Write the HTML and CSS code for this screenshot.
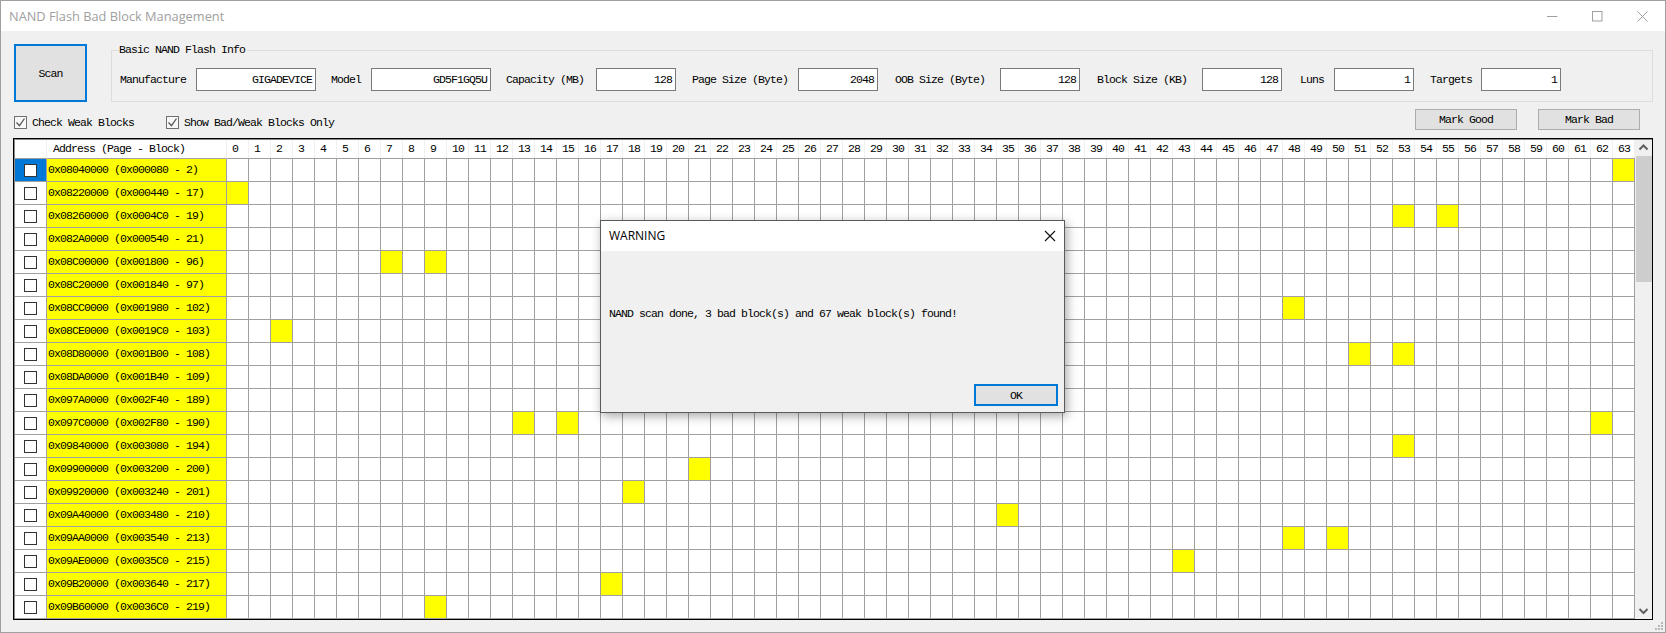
FILE: index.html
```html
<!DOCTYPE html>
<html lang="en">
<head>
<meta charset="utf-8">
<title>NAND Flash Bad Block Management</title>
<link rel="stylesheet" href="styles.css">
</head>
<body>
<div class="window">
  <header class="titlebar">
    <span class="title">NAND Flash Bad Block Management</span>
    <div class="controls">
      <svg width="11" height="11" viewBox="0 0 11 11"><path d="M0 5.5h10.5" stroke="#a0a0a0" fill="none"/></svg>
      <svg width="11" height="11" viewBox="0 0 11 11"><rect x="0.5" y="0.5" width="9.5" height="9.5" stroke="#a0a0a0" fill="none"/></svg>
      <svg width="11" height="11" viewBox="0 0 11 11"><path d="M0.5 0.5l10 10M10.500 0.5l-10 10" stroke="#a0a0a0" fill="none"/></svg>
    </div>
  </header>
  <main class="content">
    <section class="top-row">
      <button class="btn scan">Scan</button>
      <fieldset class="info">
        <legend>Basic NAND Flash Info</legend>
        <div class="info-grid">
          <label>Manufacture</label><span class="value">GIGADEVICE</span>
          <label>Model</label><span class="value">GD5F1GQ5U</span>
          <label>Capacity (MB)</label><span class="value short">128</span>
          <label>Page Size (Byte)</label><span class="value short">2048</span>
          <label>OOB Size (Byte)</label><span class="value short">128</span>
          <label>Block Size (KB)</label><span class="value short">128</span>
          <label>Luns</label><span class="value short">1</span>
          <label>Targets</label><span class="value short">1</span>
        </div>
      </fieldset>
    </section>
    <section class="options">
      <span class="check-label first"><span class="box checked"><svg width="11" height="11" viewBox="0 0 11 11"><path d="M1.500 5.500l3 3.200 5-7.200" stroke="#555" stroke-width="1.3" fill="none"/></svg></span>Check Weak Blocks</span>
      <span class="check-label second"><span class="box checked"><svg width="11" height="11" viewBox="0 0 11 11"><path d="M1.500 5.500l3 3.200 5-7.200" stroke="#555" stroke-width="1.3" fill="none"/></svg></span>Show Bad/Weak Blocks Only</span>
      <button class="btn mark good">Mark Good</button>
      <button class="btn mark">Mark Bad</button>
    </section>
    <section class="table">
      <div class="table-main">
        <div class="row head">
          <div class="chk"></div>
          <div class="addr">Address (Page - Block)</div>
          <div class="cols">
            <span>0</span><span>1</span><span>2</span><span>3</span><span>4</span><span>5</span><span>6</span><span>7</span><span>8</span><span>9</span><span>10</span><span>11</span><span>12</span><span>13</span><span>14</span><span>15</span><span>16</span><span>17</span><span>18</span><span>19</span><span>20</span><span>21</span><span>22</span><span>23</span><span>24</span><span>25</span><span>26</span><span>27</span><span>28</span><span>29</span><span>30</span><span>31</span><span>32</span><span>33</span><span>34</span><span>35</span><span>36</span><span>37</span><span>38</span><span>39</span><span>40</span><span>41</span><span>42</span><span>43</span><span>44</span><span>45</span><span>46</span><span>47</span><span>48</span><span>49</span><span>50</span><span>51</span><span>52</span><span>53</span><span>54</span><span>55</span><span>56</span><span>57</span><span>58</span><span>59</span><span>60</span><span>61</span><span>62</span><span>63</span>
          </div>
        </div>
        <div class="row"><div class="chk selected"><span class="box white"></span></div><div class="addr y">0x08040000 (0x000080 - 2)</div><div class="cells"><i style="grid-column:64"></i></div></div>
        <div class="row"><div class="chk"><span class="box"></span></div><div class="addr y">0x08220000 (0x000440 - 17)</div><div class="cells"><i style="grid-column:1"></i></div></div>
        <div class="row"><div class="chk"><span class="box"></span></div><div class="addr y">0x08260000 (0x0004C0 - 19)</div><div class="cells"><i style="grid-column:54"></i><i style="grid-column:56"></i></div></div>
        <div class="row"><div class="chk"><span class="box"></span></div><div class="addr y">0x082A0000 (0x000540 - 21)</div><div class="cells"></div></div>
        <div class="row"><div class="chk"><span class="box"></span></div><div class="addr y">0x08C00000 (0x001800 - 96)</div><div class="cells"><i style="grid-column:8"></i><i style="grid-column:10"></i></div></div>
        <div class="row"><div class="chk"><span class="box"></span></div><div class="addr y">0x08C20000 (0x001840 - 97)</div><div class="cells"></div></div>
        <div class="row"><div class="chk"><span class="box"></span></div><div class="addr y">0x08CC0000 (0x001980 - 102)</div><div class="cells"><i style="grid-column:49"></i></div></div>
        <div class="row"><div class="chk"><span class="box"></span></div><div class="addr y">0x08CE0000 (0x0019C0 - 103)</div><div class="cells"><i style="grid-column:3"></i></div></div>
        <div class="row"><div class="chk"><span class="box"></span></div><div class="addr y">0x08D80000 (0x001B00 - 108)</div><div class="cells"><i style="grid-column:52"></i><i style="grid-column:54"></i></div></div>
        <div class="row"><div class="chk"><span class="box"></span></div><div class="addr y">0x08DA0000 (0x001B40 - 109)</div><div class="cells"></div></div>
        <div class="row"><div class="chk"><span class="box"></span></div><div class="addr y">0x097A0000 (0x002F40 - 189)</div><div class="cells"></div></div>
        <div class="row"><div class="chk"><span class="box"></span></div><div class="addr y">0x097C0000 (0x002F80 - 190)</div><div class="cells"><i style="grid-column:14"></i><i style="grid-column:16"></i><i style="grid-column:63"></i></div></div>
        <div class="row"><div class="chk"><span class="box"></span></div><div class="addr y">0x09840000 (0x003080 - 194)</div><div class="cells"><i style="grid-column:54"></i></div></div>
        <div class="row"><div class="chk"><span class="box"></span></div><div class="addr y">0x09900000 (0x003200 - 200)</div><div class="cells"><i style="grid-column:22"></i></div></div>
        <div class="row"><div class="chk"><span class="box"></span></div><div class="addr y">0x09920000 (0x003240 - 201)</div><div class="cells"><i style="grid-column:19"></i></div></div>
        <div class="row"><div class="chk"><span class="box"></span></div><div class="addr y">0x09A40000 (0x003480 - 210)</div><div class="cells"><i style="grid-column:36"></i></div></div>
        <div class="row"><div class="chk"><span class="box"></span></div><div class="addr y">0x09AA0000 (0x003540 - 213)</div><div class="cells"><i style="grid-column:49"></i><i style="grid-column:51"></i></div></div>
        <div class="row"><div class="chk"><span class="box"></span></div><div class="addr y">0x09AE0000 (0x0035C0 - 215)</div><div class="cells"><i style="grid-column:44"></i></div></div>
        <div class="row"><div class="chk"><span class="box"></span></div><div class="addr y">0x09B20000 (0x003640 - 217)</div><div class="cells"><i style="grid-column:18"></i></div></div>
        <div class="row"><div class="chk"><span class="box"></span></div><div class="addr y">0x09B60000 (0x0036C0 - 219)</div><div class="cells"><i style="grid-column:10"></i></div></div>
      </div>
      <div class="scrollbar">
        <svg class="arrow" width="15" height="16" viewBox="0 0 15 16"><path d="M3.500 9.500l4-4 4 4" stroke="#606060" stroke-width="2" fill="none"/></svg>
        <div class="track"><div class="thumb"></div></div>
        <svg class="arrow" width="15" height="16" viewBox="0 0 15 16"><path d="M3.500 6l4 4 4-4" stroke="#606060" stroke-width="2" fill="none"/></svg>
      </div>
    </section>
    <svg class="grip" width="10" height="10" viewBox="0 0 10 10"><path d="M7 1h2v2H7zM4 4h2v2H4zM7 4h2v2H7zM1 7h2v2H1zM4 7h2v2H4zM7 7h2v2H7z" fill="#b8b8b8"/></svg>
  </main>
  <div class="dialog">
    <div class="dialog-title">
      <span>WARNING</span>
      <svg width="12" height="12" viewBox="0 0 12 12"><path d="M1 1l10 10M11 1L1 11" stroke="#111" stroke-width="1.1" fill="none"/></svg>
    </div>
    <div class="dialog-body">
      <p>NAND scan done, 3 bad block(s) and 67 weak block(s) found!</p>
      <div class="dialog-actions"><button class="btn ok">OK</button></div>
    </div>
  </div>
</div>
</body>
</html>
```
FILE: styles.css
```css
* { box-sizing: border-box; }
html, body { margin: 0; height: 100%; overflow: hidden; background: #f0f0f0; }
body, button {
  font-family: "Liberation Mono", monospace;
  font-size: 11.5px;
  letter-spacing: -0.9px;
  color: #000;
}
.window {
  position: relative;
  width: 1666px;
  height: 633px;
  border: 1px solid #a0a0a0;
  display: flex;
  flex-direction: column;
  background: #f0f0f0;
}
.titlebar {
  height: 30px;
  background: #fff;
  display: flex;
  align-items: center;
  justify-content: space-between;
  padding-left: 8px;
}
.title {
  font-family: "Open Sans", sans-serif;
  font-size: 12.800px;
  letter-spacing: 0;
  color: #a0a0a0;
}
.controls { display: flex; gap: 34px; padding-right: 17px; }
.content { position: relative; flex: 1; padding: 13px 12px 0 13px; }
.btn {
  display: block;
  background: #e1e1e1;
  border: 1px solid #adadad;
  padding: 0;
}
.top-row { display: flex; align-items: flex-start; }
.scan { width: 73px; height: 58px; border: 2px solid #0078d7; flex: none; }
.info {
  flex: 1;
  margin: 0 0 0 24px;
  padding: 12px 0 0 8px;
  height: 58px;
  border: 1px solid #dcdcdc;
  min-width: 0;
}
.info legend { padding: 0 2px 0 0; margin-left: -1px; line-height: 12px; }
.info-grid {
  display: grid;
  grid-template-columns: 76px 135px 40px 135px 90px 96px 106px 97px 105px 97px 105px 98px 34px 96px 51px 80px;
  align-items: center;
}
.value {
  display: block;
  width: 120px;
  height: 23px;
  line-height: 21px;
  background: #fff;
  border: 1px solid #7a7a7a;
  text-align: right;
  padding-right: 3px;
}
.value.short { width: 80px; }
.options {
  display: flex;
  align-items: center;
  height: 21px;
  margin-top: 7px;
}
.check-label { display: flex; align-items: center; gap: 5px; height: 21px; margin-top: 6px; }
.first { width: 152px; }
.second { flex: 1; }
.box {
  display: flex;
  width: 13px;
  height: 13px;
  background: #fff;
  border: 1px solid #333;
  flex: none;
}
.box.checked { border-color: #707070; background: #f8f8f8; }
.mark { width: 102px; height: 21px; }
.good { margin-right: 21px; }
.mark:last-child { margin-right: 13px; }
.table {
  display: flex;
  margin-top: 8px;
  margin-left: -1px;
  width: 1640px;
  height: 482px;
  padding: 1px 0 0 1px;
  border: 1px solid #000;
  background: #fff;
  box-shadow: inset 1px 1px 0 #8a8a8a;
}
.table-main { width: 1620px; flex: none; }
.row { display: flex; height: 23px; }
.row.head { height: 19px; }
.chk {
  width: 31px;
  flex: none;
  display: flex;
  align-items: center;
  justify-content: center;
  border-bottom: 1px solid #a0a0a0;
  background: #fff;
}
.chk.selected { background: #0078d7; }
.addr {
  width: 181px;
  flex: none;
  line-height: 22px;
  padding-left: 1px;
  border-left: 1px solid #a0a0a0;
  border-right: 1px solid #a0a0a0;
  border-bottom: 1px solid #a0a0a0;
  white-space: nowrap;
}
.addr.y { background: #ff0; }
.head .addr {
  padding-left: 6px;
  border-left-color: #f0f0f0;
  border-right-color: #f0f0f0;
  line-height: 18px;
}
.cols, .cells { display: grid; grid-template-columns: repeat(64, 22px); width: 1408px; flex: none; }
.cols { border-bottom: 1px solid #a0a0a0; }
.cols span { padding-left: 5px; line-height: 18px; border-right: 1px solid #f0f0f0; }
.cells {
  grid-template-rows: 22px;
  border-bottom: 1px solid #a0a0a0;
  background: repeating-linear-gradient(to right, transparent 0 21px, #a0a0a0 21px 22px);
}
.cells i { display: block; grid-row: 1; width: 21px; height: 22px; background: #ff0; }
.scrollbar {
  flex: 1;
  display: flex;
  flex-direction: column;
  background: #f0f0f0;
  padding-left: 1px;
}
.arrow { flex: none; }
.track { flex: 1; }
.thumb { height: 126px; background: #cdcdcd; }
.grip { position: absolute; right: 1px; bottom: 1px; }
.dialog {
  position: absolute;
  left: 599px;
  top: 219px;
  width: 465px;
  height: 193px;
  border: 1px solid #5a5a5a;
  background: #f0f0f0;
  box-shadow: 2px 3px 10px rgba(0, 0, 0, 0.35);
  display: flex;
  flex-direction: column;
}
.dialog-title {
  height: 30px;
  flex: none;
  background: #fff;
  display: flex;
  align-items: center;
  justify-content: space-between;
  padding: 0 8px 1px 8px;
  font-family: "Open Sans", sans-serif;
  font-size: 12px;
  letter-spacing: 0;
}
.dialog-body {
  flex: 1;
  display: flex;
  flex-direction: column;
  justify-content: space-between;
  padding: 56px 6px 6px 8px;
}
.dialog-body p { margin: 0; line-height: 14px; }
.dialog-actions { display: flex; justify-content: flex-end; }
.ok { width: 84px; height: 22px; border: 2px solid #0078d7; }
```
